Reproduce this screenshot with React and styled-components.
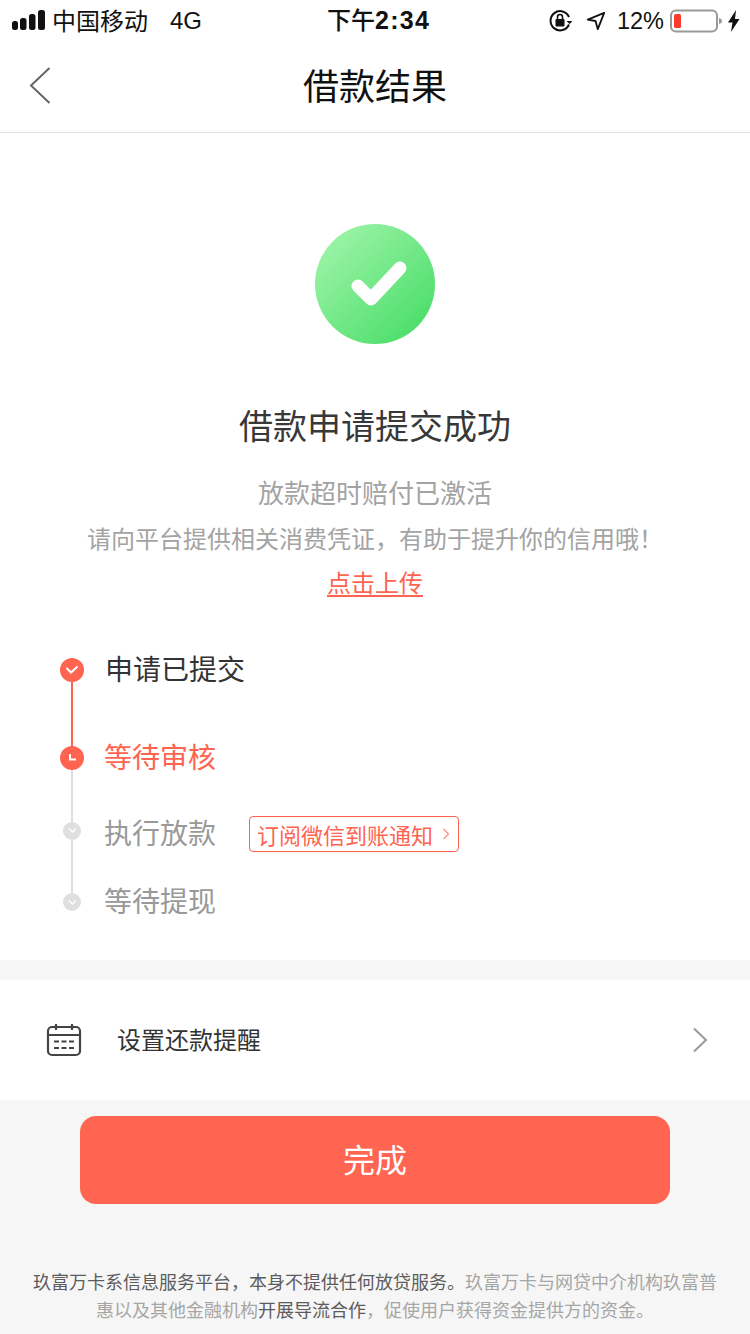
import React from 'react';
import styled, { createGlobalStyle } from 'styled-components';

const Global = createGlobalStyle`
  html, body { margin: 0; padding: 0; background: #f6f6f6; }
  * { box-sizing: border-box; }
  body { font-family: "Liberation Sans", "Noto Sans CJK SC", sans-serif; }
`;
const CJK = `"Noto Sans CJK SC", "Liberation Sans", sans-serif`;
const Page = styled.div`
  width: 750px; height: 1334px; overflow: hidden; display: flex; flex-direction: column; background: #f6f6f6;
`;
const StatusBar = styled.div`
  height: 42px; background: #fff; display: flex; align-items: center; justify-content: space-between;
  padding: 0 10px 0 12px; color: #111; font-size: 24px; position: relative;
`;
const StatusSide = styled.div`display: flex; align-items: center;`;
const Signal = styled.svg`margin-bottom: 2px;`;
const Carrier = styled.span`font-family: ${CJK}; font-size: 24px; margin: 0 0 4px 7px;`;
const Net = styled.span`margin-left: 22px; font-size: 24px;`;
const Clock = styled.span`
  position: absolute; left: 327px; top: 1px; font-size: 24px; font-family: ${CJK}; font-weight: 500; line-height: 36px; color: #111; white-space: nowrap;
`;
const ClockDigits = styled.b`font: 700 25px/36px "Liberation Sans", sans-serif; letter-spacing: 1.300px;`;
const Pct = styled.span`font-size: 23.500px; margin: 0 6px 0 11px;`;
const NavBar = styled.div`
  height: 91px; background: #fff; border-bottom: 1px solid #e4e4e4; display: flex; align-items: center; justify-content: center; position: relative;
`;
const NavTitle = styled.h1`margin: 0 0 7px; font: 400 36px/50px ${CJK}; color: #111;`;
const Back = styled.svg`position: absolute; left: 28px; top: 25px;`;
const Main = styled.div`
  height: 827px; background: #fff; display: flex; flex-direction: column; align-items: center; padding-top: 91px;
`;
const Success = styled.div`
  width: 120px; height: 120px; border-radius: 50%; background: linear-gradient(135deg, #a2f5ab 5%, #46dc66 95%);
  display: flex; align-items: center; justify-content: center;
`;
const Heading = styled.h2`margin: 57px 0 0; font: 400 34px/48px ${CJK}; color: #383838;`;
const Sub = styled.p`margin: 0; font: 400 ${p => p.$size}px/45.500px ${CJK}; color: #a3a3a3; text-align: center;`;
const Lines = styled.div`margin-top: 20px; display: flex; flex-direction: column; align-items: center;`;
const Upload = styled.a`margin-top: -1px; font: 400 24px/45px ${CJK}; color: #ff6450; text-decoration: underline; text-underline-offset: 3px;`;
const Steps = styled.div`align-self: stretch; padding: 22px 0 0 60px; display: flex; flex-direction: column;`;
const Step = styled.div`
  display: flex; align-items: center; height: ${p => p.$h}px; position: relative;
`;
const Dot = styled.div`
  width: ${p => p.$s}px; height: ${p => p.$s}px; margin-left: ${p => (24 - p.$s) / 2}px; border-radius: 50%; background: ${p => p.$c};
  display: flex; align-items: center; justify-content: center; flex: none;
`;
const Rail = styled.div`
  position: absolute; left: 11px; width: 2px; top: ${p => p.$t}px; height: ${p => p.$h}px; background: ${p => p.$c};
`;
const StepLabel = styled.span`
  font: 400 28px/40px ${CJK}; color: ${p => p.$c}; margin-left: ${p => p.$ml}px; margin-top: ${p => p.$mt || 0}px; margin-bottom: ${p => p.$mb || 0}px;
`;
const Notify = styled.div`
  margin: 7px 0 0 33px; width: 210px; height: 36px; border: 1px solid #ff6450; border-radius: 4px; display: flex; align-items: center;
  padding-left: 7px; font: 400 22px/30px ${CJK}; color: #ff6450;
`;
const NotifyArrow = styled.svg`margin-left: 9px;`;
const Gap = styled.div`height: 20px; flex: none;`;
const RemindRow = styled.div`
  height: 120px; background: #fff; display: flex; align-items: center; padding: 0 42px 0 46px;
`;
const RemindText = styled.span`margin: 0 0 2px 35px; font: 400 24px/34px ${CJK}; color: #333; flex: 1;`;
const Footer = styled.div`flex: 1; display: flex; flex-direction: column; align-items: center;`;
const Done = styled.button`
  margin-top: 16px; width: 590px; height: 88px; border: 0; padding: 0 0 4px; border-radius: 16px; background: #ff6550; color: #fff; font: 400 32px/44px ${CJK};
`;
const Legal = styled.p`
  margin: 63px 0 0; width: 690px; text-align: center; font: 400 18px/28px ${CJK}; color: #a6a6a6;
`;
const Dark = styled.span`color: #5c5c5c;`;

export default function App() {
  return (
    <Page>
      <Global />
      <StatusBar>
        <StatusSide>
          <Signal width="33" height="20" viewBox="0 0 33 20">
            <rect x="0" y="11" width="6" height="9" rx="2.500" fill="#111" />
            <rect x="8" y="8" width="6.500" height="12" rx="2.500" fill="#111" />
            <rect x="17" y="4" width="6.500" height="16" rx="2.500" fill="#111" />
            <rect x="26" y="0" width="7" height="20" rx="2.500" fill="#111" />
          </Signal>
          <Carrier>中国移动</Carrier>
          <Net>4G</Net>
        </StatusSide>
        <Clock>下午<ClockDigits>2:34</ClockDigits></Clock>
        <StatusSide>
          <svg width="24" height="24" viewBox="0 0 24 24">
            <path d="M20 15.500A9.600 9.600 0 1 1 20 8" fill="none" stroke="#111" strokeWidth="2" />
            <path d="M17.500 12l3 3 3-3z" fill="#111" />
            <rect x="6.500" y="10" width="9" height="7.500" rx="1" fill="#111" />
            <path d="M8.500 10V8a2.500 2.500 0 0 1 5 0v2" fill="none" stroke="#111" strokeWidth="1.600" />
          </svg>
          <svg width="20" height="22" viewBox="0 0 22 22" style={{ marginLeft: 13 }}>
            <path d="M20 2L2 9.500l8.500 1.500L13 20z" fill="none" stroke="#111" strokeWidth="2" strokeLinejoin="round" />
          </svg>
          <Pct>12%</Pct>
          <svg width="52" height="24" viewBox="0 0 52 24">
            <rect x="1" y="1.500" width="46" height="21" rx="5" fill="none" stroke="#999" strokeWidth="2" />
            <rect x="4" y="5" width="7" height="14" rx="1.500" fill="#ff3b30" />
            <path d="M49 9c2 .5 3 1.500 3 3s-1 2.500-3 3z" fill="#999" />
          </svg>
          <svg width="12" height="22" viewBox="0 0 12 22" style={{ marginLeft: 6 }}>
            <path d="M8 0L0 12.500h4.500L3 22l8.500-13H7z" fill="#111" />
          </svg>
        </StatusSide>
      </StatusBar>
      <NavBar>
        <Back width="24" height="38" viewBox="0 0 24 38">
          <path d="M21.500 1L3 18.500 21.500 36" fill="none" stroke="#666" strokeWidth="2" />
        </Back>
        <NavTitle>借款结果</NavTitle>
      </NavBar>
      <Main>
        <Success>
          <svg width="64" height="50" viewBox="0 0 64 50">
            <path d="M15 27L28 40 57 9" fill="none" stroke="#fff" strokeWidth="13" strokeLinecap="round" strokeLinejoin="round" />
          </svg>
        </Success>
        <Heading>借款申请提交成功</Heading>
        <Lines>
          <Sub $size={26}>放款超时赔付已激活</Sub>
          <Sub $size={24}>请向平台提供相关消费凭证，有助于提升你的信用哦！</Sub>
          <Upload>点击上传</Upload>
        </Lines>
        <Steps>
          <Step $h={88}>
            <Dot $s={24} $c="#ff6450">
              <svg width="14" height="10" viewBox="0 0 14 10"><path d="M1.500 3L6 7.500 12.500 1.500" fill="none" stroke="#fff" strokeWidth="2" /></svg>
            </Dot>
            <StepLabel $c="#333" $ml={21} $mb={4}>申请已提交</StepLabel>
            <Rail $c="#ff6450" $t={56} $h={64} />
          </Step>
          <Step $h={88}>
            <Dot $s={24} $c="#ff6450">
              <svg width="10" height="10" viewBox="0 0 10 10"><path d="M3 1v5.500h6" fill="none" stroke="#fff" strokeWidth="2" /></svg>
            </Dot>
            <StepLabel $c="#ff6450" $ml={20} $mb={4}>等待审核</StepLabel>
            <Rail $c="#dfdfdf" $t={56} $h={52} />
          </Step>
          <Step $h={57}>
            <Dot $s={18} $c="#dfdfdf">
              <svg width="9" height="7" viewBox="0 0 9 7"><path d="M1 1.500l3.500 3.500L8 1.500" fill="none" stroke="#fff" strokeWidth="1.500" /></svg>
            </Dot>
            <StepLabel $c="#999" $ml={23} $mt={3}>执行放款</StepLabel>
            <Notify>
              订阅微信到账通知
              <NotifyArrow width="8" height="12" viewBox="0 0 8 12"><path d="M1.500 1l5 5-5 5" fill="none" stroke="#ff8a7a" strokeWidth="1.200" /></NotifyArrow>
            </Notify>
            <Rail $c="#dfdfdf" $t={37} $h={54} />
          </Step>
          <Step $h={86}>
            <Dot $s={18} $c="#dfdfdf">
              <svg width="9" height="7" viewBox="0 0 9 7"><path d="M1 1.500l3.500 3.500L8 1.500" fill="none" stroke="#fff" strokeWidth="1.500" /></svg>
            </Dot>
            <StepLabel $c="#999" $ml={23} $mb={4}>等待提现</StepLabel>
          </Step>
        </Steps>
      </Main>
      <Gap />
      <RemindRow>
        <svg width="36" height="34" viewBox="0 0 36 34">
          <rect x="2" y="4" width="32" height="28" rx="4" fill="none" stroke="#444" strokeWidth="2.200" />
          <path d="M2 12h32M10 1v6M26 1v6" fill="none" stroke="#444" strokeWidth="2.200" />
          <path d="M8 18.500h5M15.500 18.500h5M23 18.500h5M8 25h5M15.500 25h5M23 25h5" fill="none" stroke="#444" strokeWidth="2" />
        </svg>
        <RemindText>设置还款提醒</RemindText>
        <svg width="16" height="26" viewBox="0 0 16 26">
          <path d="M2 1.500L14 13 2 24.500" fill="none" stroke="#999" strokeWidth="2" />
        </svg>
      </RemindRow>
      <Footer>
        <Done>完成</Done>
        <Legal>
          <Dark>玖富万卡系信息服务平台，本身不提供任何放贷服务。</Dark>玖富万卡与网贷中介机构玖富普惠以及其他金融机构<Dark>开展导流合作</Dark>，促使用户获得资金提供方的资金。
        </Legal>
      </Footer>
    </Page>
  );
}
